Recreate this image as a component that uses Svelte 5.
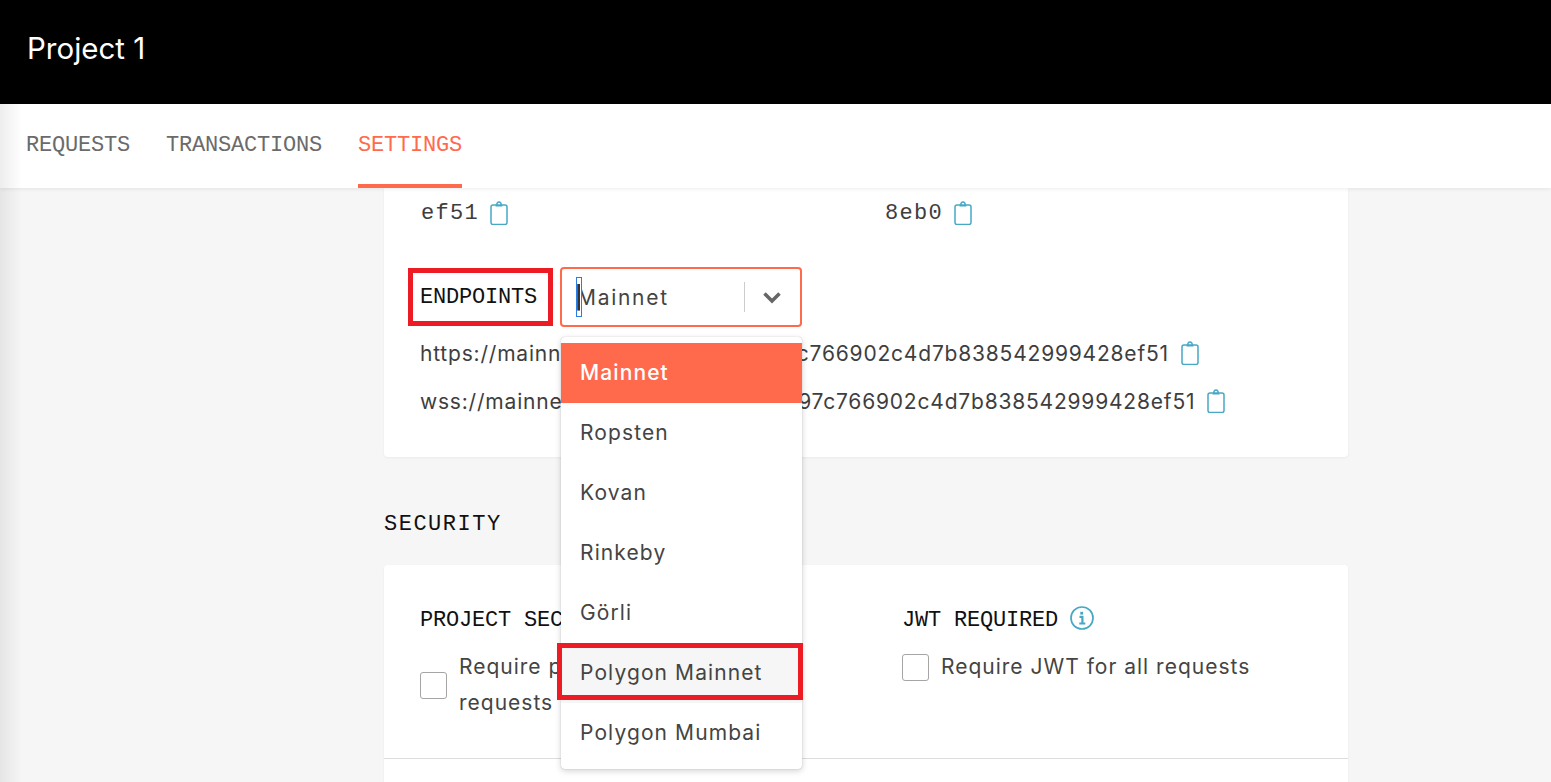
<script lang="ts">
  const tabs = ['REQUESTS', 'TRANSACTIONS', 'SETTINGS'];
  const networks = ['Mainnet', 'Ropsten', 'Kovan', 'Rinkeby', 'Görli', 'Polygon Mainnet', 'Polygon Mumbai'];
  const clip = 'M3 4h12a2 2 0 0 1 2 2v15.500a2 2 0 0 1-2 2H3a2 2 0 0 1-2-2V6a2 2 0 0 1 2-2zM5.500 4.800h7M7 3.800a2.100 2.100 0 1 1 4 0';
</script>

<div class="page">
  <header class="top">
    <h1>Project 1</h1>
  </header>

  <nav class="tabs">
    {#each tabs as tab}
      <span class="tab" class:active={tab === 'SETTINGS'}>{tab}</span>
    {/each}
  </nav>

  <main class="content">
    <section class="card keys">
      <div class="key-row">
        <div class="key">
          <span class="hash">ef51</span>
          <svg class="copy" width="18" height="24" viewBox="0 0 18 24"><path d={clip} /></svg>
        </div>
        <div class="key">
          <span class="hash">8eb0</span>
          <svg class="copy" width="18" height="24" viewBox="0 0 18 24"><path d={clip} /></svg>
        </div>
      </div>

      <div class="endpoint-head">
        <h3 class="label boxed">ENDPOINTS</h3>
        <div class="select">
          <span class="caret"></span>
          <span class="value">Mainnet</span>
          <span class="sep"></span>
          <svg class="chev" width="20" height="13" viewBox="0 0 20 13"><path d="M2.500 2.500l7.500 7.500 7.500-7.500" /></svg>

          <ul class="menu">
            {#each networks as net}
              <li class:selected={net === 'Mainnet'} class:marked={net === 'Polygon Mainnet'}>{net}</li>
            {/each}
          </ul>
        </div>
      </div>

      <div class="url first">
        <span>https://mainnet.infura.io/v3/7dab97c766902c4d7b838542999428ef51</span>
        <svg class="copy" width="18" height="24" viewBox="0 0 18 24"><path d={clip} /></svg>
      </div>
      <div class="url">
        <span>wss://mainnet.infura.io/ws/v3/7dab97c766902c4d7b838542999428ef51</span>
        <svg class="copy" width="18" height="24" viewBox="0 0 18 24"><path d={clip} /></svg>
      </div>
    </section>

    <h2 class="section-title">SECURITY</h2>

    <section class="card security">
      <div class="sec-grid">
        <div>
          <h3 class="label head"><span class="head-text">PROJECT SECRET</span></h3>
          <label class="check">
            <input type="checkbox" />
            <span>Require project secret for all requests</span>
          </label>
        </div>
        <div>
          <h3 class="label head">
            <span class="head-text">JWT REQUIRED</span>
            <svg width="24" height="24" viewBox="0 0 24 24" class="info">
              <circle cx="12" cy="12" r="11" />
              <path class="dot" d="M10.300 5.800h2.800v2.800h-2.800z" />
              <path class="stem" d="M9.500 10.800h2.900v6.400M9.300 17.500h6" />
            </svg>
          </h3>
          <label class="check">
            <input type="checkbox" />
            <span>Require JWT for all requests</span>
          </label>
        </div>
      </div>
      <div class="divider"></div>
    </section>
  </main>

  <div class="edge"></div>
</div>

<style>
  :global(body) {
    margin: 0;
    background: #f6f6f6;
  }

  .page {
    position: relative;
    display: flex;
    flex-direction: column;
    height: 100vh;
    overflow: hidden;
    font-family: Inter, "Noto Sans", sans-serif;
    color: #3e3e3e;
  }

  .top {
    flex: none;
    height: 104px;
    background: #000;
    display: flex;
    align-items: center;
    padding: 0 27px;
    box-sizing: border-box;
  }

  .top h1 {
    margin: 0 0 8px;
    font-size: 29.500px;
    font-weight: 400;
    color: #fff;
  }

  .tabs {
    flex: none;
    position: relative;
    z-index: 2;
    height: 84px;
    box-sizing: border-box;
    padding: 0 26px;
    display: flex;
    gap: 36px;
    background: #fff;
    box-shadow: 0 1px 4px rgba(0, 0, 0, 0.08);
  }

  .tab {
    font-family: "Liberation Mono", monospace;
    font-size: 22px;
    letter-spacing: -0.200px;
    line-height: 83px;
    color: #6b6b6b;
  }

  .tab.active {
    color: #ff6a4d;
    border-bottom: 4px solid #ff6a4d;
    box-sizing: border-box;
    height: 84px;
  }

  .content {
    flex: 1;
    min-height: 0;
    width: 964px;
    margin-left: 384px;
  }

  .card {
    background: #fff;
    border-radius: 0 0 4px 4px;
    box-shadow: 0 1px 3px rgba(0, 0, 0, 0.05);
    padding: 0 36px;
  }

  .keys {
    height: 269px;
    box-sizing: border-box;
    padding-top: 12px;
  }

  .key-row {
    display: flex;
  }

  .key {
    flex: none;
    width: 464px;
    height: 26px;
    box-sizing: border-box;
    padding-left: 1px;
    display: flex;
    align-items: center;
    gap: 11px;
  }

  .hash {
    font-family: "Liberation Mono", monospace;
    font-size: 22px;
    letter-spacing: 1.300px;
  }

  .copy path {
    fill: none;
    stroke: #47a8c5;
    stroke-width: 1.500;
  }

  .endpoint-head {
    display: flex;
    align-items: center;
    gap: 7px;
    margin: 41px 0 0 -12px;
  }

  .label {
    margin: 0;
    font-family: "Liberation Mono", monospace;
    font-size: 22px;
    font-weight: 400;
    letter-spacing: -0.200px;
    color: #111;
  }

  .boxed {
    border: 5px solid #ed1c24;
    padding: 2px 11px 0 7px;
    line-height: 46px;
  }

  .select {
    position: relative;
    width: 242px;
    height: 60px;
    box-sizing: border-box;
    border: 2px solid #ff6a4d;
    border-radius: 4px;
    display: flex;
    align-items: center;
    padding-left: 15px;
  }

  .caret {
    position: absolute;
    left: 14px;
    top: 8px;
    width: 6px;
    height: 40px;
    box-sizing: border-box;
    border: 1px solid #2a7de1;
    background: linear-gradient(90deg, #1f6fd6 0 1px, #333 1px 3px, #fff 3px) center / 100% 70% no-repeat, #fff;
  }

  .value {
    flex: 1;
    font-size: 21px;
    letter-spacing: 1.700px;
    color: #444;
  }

  .sep {
    width: 1px;
    height: 30px;
    background: #ccc;
  }

  .chev {
    margin: 0 18px 0 17px;
  }

  .chev path {
    fill: none;
    stroke: #666;
    stroke-width: 3.500;
  }

  .menu {
    position: absolute;
    z-index: 1;
    top: 68px;
    left: -1px;
    width: 241px;
    margin: 0;
    padding: 6px 0;
    list-style: none;
    background: #fff;
    border-radius: 4px;
    box-shadow: 0 0 1px rgba(0, 0, 0, 0.3), 0 2px 6px rgba(0, 0, 0, 0.18);
  }

  .menu li {
    position: relative;
    height: 60px;
    line-height: 60px;
    padding-left: 19px;
    font-size: 21px;
    letter-spacing: 1.100px;
    color: #444;
  }

  .menu li.selected {
    background: #ff6a4d;
    color: #fff;
    font-weight: 500;
  }

  .menu li.marked {
    background: #f6f6f6;
  }

  /* red annotation around the polygon row */
  .menu li.marked::after {
    content: '';
    position: absolute;
    left: -4px;
    right: -1px;
    top: 0;
    bottom: 3px;
    border: 5px solid #ed1c24;
  }

  .url {
    display: flex;
    align-items: center;
    gap: 12px;
    height: 48px;
    font-size: 21px;
    letter-spacing: 0.800px;
  }

  .url.first {
    margin-top: 2px;
  }

  .section-title {
    margin: 0;
    height: 108px;
    box-sizing: border-box;
    padding-top: 54px;
    font-family: "Liberation Mono", monospace;
    font-size: 22px;
    line-height: 28px;
    font-weight: 400;
    letter-spacing: 1.500px;
    color: #111;
  }

  .security {
    border-radius: 4px 4px 0 0;
    padding-top: 40px;
    height: 400px;
    box-sizing: border-box;
    position: relative;
  }

  .sec-grid {
    display: grid;
    grid-template-columns: 482px 1fr;
    height: 153px;
  }

  .head {
    display: flex;
    align-items: center;
    gap: 12px;
    height: 28px;
  }

  .head-text {
    padding-top: 3px;
  }

  .info {
    margin-top: -2px;
  }

  .info circle {
    fill: none;
    stroke: #47a8c5;
    stroke-width: 1.700;
  }

  .info .dot {
    fill: #47a8c5;
  }

  .info .stem {
    fill: none;
    stroke: #47a8c5;
    stroke-width: 2.200;
  }

  .check {
    display: flex;
    align-items: center;
    gap: 12px;
    margin-top: 16px;
    font-size: 21px;
    letter-spacing: 1px;
    line-height: 36px;
    color: #444;
    max-width: 423px;
  }

  .check input {
    appearance: none;
    flex: none;
    width: 27px;
    height: 27px;
    margin: 0;
    border: 1px solid #a5a5a5;
    border-radius: 3px;
    background: #fff;
  }

  .divider {
    height: 1px;
    margin: 0 -36px;
    background: #ddd;
  }

  .edge {
    position: absolute;
    left: 0;
    top: 104px;
    bottom: 0;
    z-index: 3;
    width: 22px;
    background: linear-gradient(90deg, rgba(0, 0, 0, 0.07), rgba(0, 0, 0, 0));
    pointer-events: none;
  }
</style>
